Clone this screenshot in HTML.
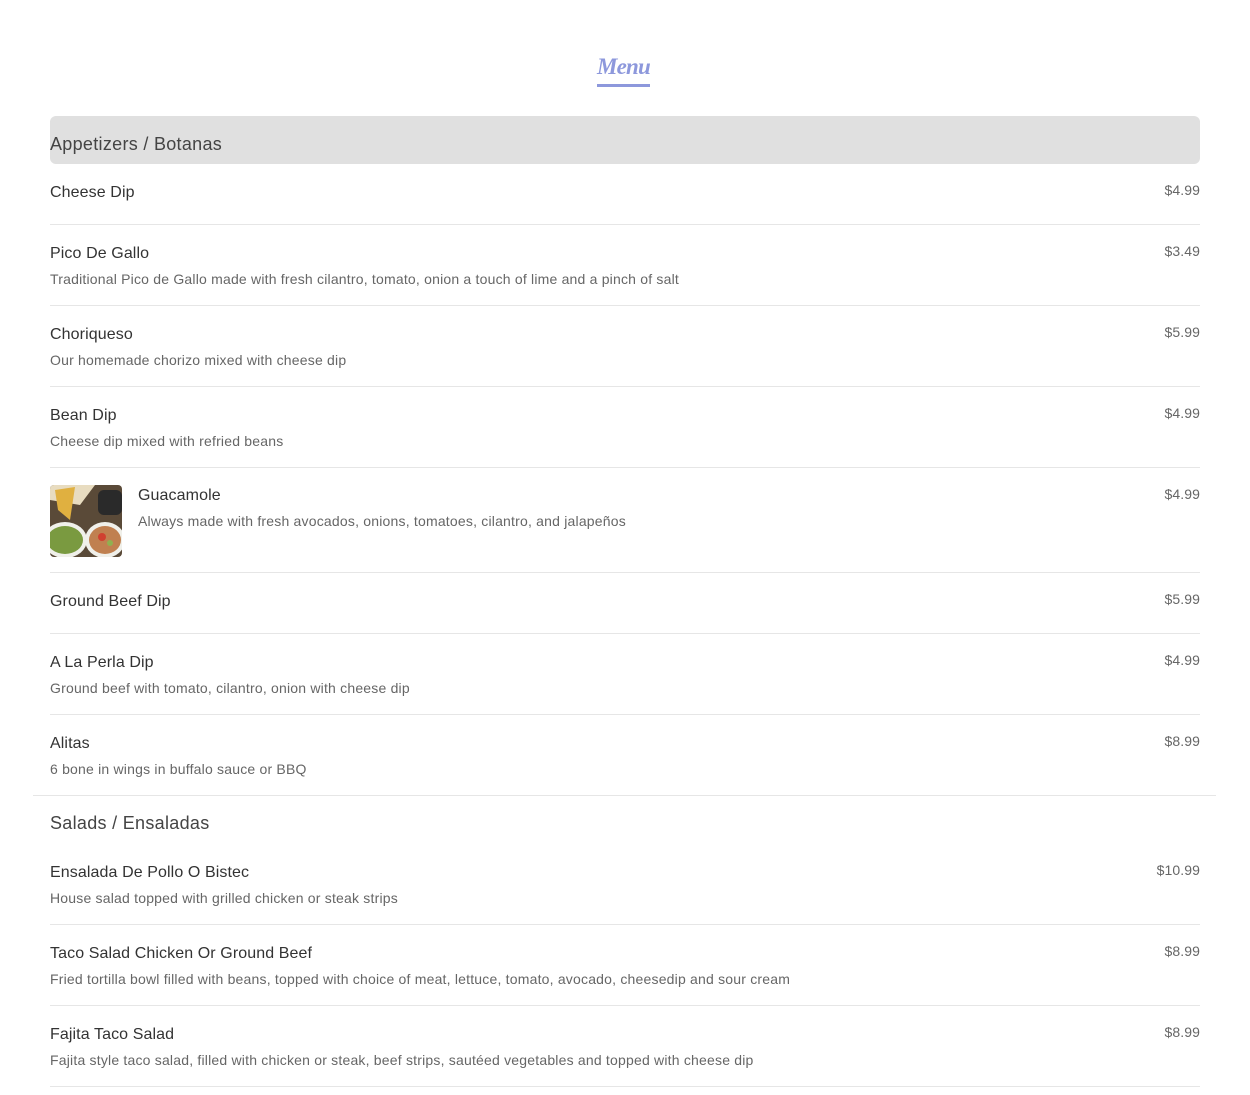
<!DOCTYPE html>
<html><head><meta charset="utf-8"><style>
*{margin:0;padding:0;box-sizing:border-box}
body{width:1250px;height:1095px;background:#fff;font-family:"Liberation Sans",sans-serif;overflow:hidden;position:relative}
.title{position:absolute;left:0;width:1250px;top:53px;text-align:center}
.title span{display:inline-block;font-family:"Liberation Serif",serif;font-style:italic;font-weight:bold;font-size:23px;color:#8d98dc;line-height:28px;padding-bottom:3px;border-bottom:3px solid #8d98dc;letter-spacing:-0.8px;margin-left:-3px}
.wrap{position:absolute;left:50px;top:116px;width:1150px}
.hdr{height:48px;background:#e0e0e0;border-radius:6px;font-size:18px;color:#444;line-height:56px;letter-spacing:0.3px}
.row{position:relative;padding-top:19px;border-bottom:1px solid #e6e6e6}
.row.short{height:61px}
.row.long{height:81px}
.n{font-size:16px;color:#333;line-height:20px;letter-spacing:0.1px}
.d{font-size:14px;color:#666;line-height:20px;margin-top:5px;letter-spacing:0.2px}
.p{position:absolute;right:0;top:16px;font-size:14px;color:#666;line-height:20px;letter-spacing:0.1px}
.sep{position:absolute;left:33px;width:1183px;top:795px;border-top:1px solid #e6e6e6}
.hdr2{height:48px;font-size:18px;color:#444;line-height:54px;letter-spacing:0.3px}
.img{position:absolute;left:0;top:17px;width:72px;height:72px;border-radius:4px;overflow:hidden}
</style></head><body>
<div class="title"><span>Menu</span></div>
<div class="wrap">
<div class="hdr">Appetizers / Botanas</div>
<div class="row short"><div class="n">Cheese Dip</div><div class="p">$4.99</div></div>
<div class="row long"><div class="n">Pico De Gallo</div><div class="d">Traditional Pico de Gallo made with fresh cilantro, tomato, onion a touch of lime and a pinch of salt</div><div class="p">$3.49</div></div>
<div class="row long"><div class="n">Choriqueso</div><div class="d">Our homemade chorizo mixed with cheese dip</div><div class="p">$5.99</div></div>
<div class="row long"><div class="n">Bean Dip</div><div class="d">Cheese dip mixed with refried beans</div><div class="p">$4.99</div></div>
<div class="row" style="height:105px;padding-left:88px;padding-top:18px">
<div class="img"><svg width="72" height="72"><rect width="72" height="72" fill="#5a4a38"/><polygon points="0,0 45,0 30,20 0,15" fill="#e8dcc0"/><polygon points="5,5 25,2 20,35 8,25" fill="#e0b040"/><ellipse cx="15" cy="55" rx="22" ry="18" fill="#f0f0ea"/><ellipse cx="15" cy="55" rx="18" ry="14" fill="#7a9a40"/><ellipse cx="55" cy="55" rx="20" ry="18" fill="#f0f0ea"/><ellipse cx="55" cy="55" rx="16" ry="14" fill="#c08050"/><circle cx="52" cy="52" r="4" fill="#d04030"/><circle cx="60" cy="58" r="3" fill="#90b050"/><rect x="48" y="5" width="24" height="25" fill="#2a2a2a" rx="6"/></svg></div>
<div class="n">Guacamole</div><div class="d">Always made with fresh avocados, onions, tomatoes, cilantro, and jalapeños</div><div class="p">$4.99</div></div>
<div class="row short"><div class="n">Ground Beef Dip</div><div class="p">$5.99</div></div>
<div class="row long"><div class="n">A La Perla Dip</div><div class="d">Ground beef with tomato, cilantro, onion with cheese dip</div><div class="p">$4.99</div></div>
<div class="row long" style="border-bottom:none"><div class="n">Alitas</div><div class="d">6 bone in wings in buffalo sauce or BBQ</div><div class="p">$8.99</div></div>
<div class="hdr2">Salads / Ensaladas</div>
<div class="row long"><div class="n">Ensalada De Pollo O Bistec</div><div class="d">House salad topped with grilled chicken or steak strips</div><div class="p">$10.99</div></div>
<div class="row long"><div class="n">Taco Salad Chicken Or Ground Beef</div><div class="d">Fried tortilla bowl filled with beans, topped with choice of meat, lettuce, tomato, avocado, cheesedip and sour cream</div><div class="p">$8.99</div></div>
<div class="row long"><div class="n">Fajita Taco Salad</div><div class="d">Fajita style taco salad, filled with chicken or steak, beef strips, sautéed vegetables and topped with cheese dip</div><div class="p">$8.99</div></div>
</div>
<div class="sep"></div>
</body></html>
